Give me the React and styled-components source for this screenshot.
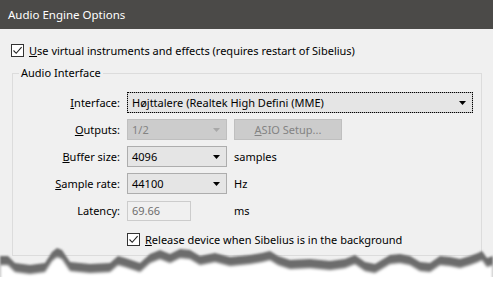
import React from "react";
import styled, { createGlobalStyle } from "styled-components";

const GlobalStyles = createGlobalStyle`
  html, body {
    margin: 0;
    padding: 0;
    background: #ffffff;
  }
  body {
    font-family: "Noto Sans", "Open Sans", sans-serif;
    font-size: 11px;
    color: #000;
  }
`;

// jagged edge of the torn screenshot, in page coordinates (y offset by 243 in the svg)
const edge = [
  [0, 256], [8, 256], [15, 263], [30, 265], [45, 263], [52, 252], [57, 248],
  [62, 250], [70, 262], [90, 264], [110, 263], [118, 256], [125, 258],
  [140, 263], [150, 254], [160, 250], [170, 254], [180, 249], [190, 250],
  [200, 256], [215, 253], [230, 257], [250, 255], [262, 253], [270, 251],
  [278, 256], [290, 260], [310, 259], [330, 261], [345, 259], [355, 255],
  [365, 262], [375, 264], [390, 255], [400, 254], [410, 256], [420, 262],
  [430, 263], [440, 256], [450, 257], [460, 259], [470, 256], [478, 253],
  [482, 251], [487, 258], [493, 256],
];

const edgePath = (dy) =>
  "M0 40 " +
  edge.map(([x, y]) => `L${x} ${y - 243 + dy}`).join(" ") +
  " L493 40 Z";

const Check = () => (
  <svg width="11" height="11" viewBox="0 0 11 11">
    <path d="M1.5 5.5 L4.2 8.3 L9.6 2.2" fill="none" stroke="#222" strokeWidth="1.1" />
  </svg>
);

const Arrow = ({ disabled }) => (
  <svg width="7" height="4" viewBox="0 0 7 4">
    <path d="M0 0 H7 L3.5 4 Z" fill={disabled ? "#a8a8a8" : "#000"} />
  </svg>
);

const Key = ({ children }) => <u>{children}</u>;

export default function App() {
  return (
    <>
      <GlobalStyles />
      <Frame>
        <TitleBar>Audio Engine Options</TitleBar>
        <Body>
          <CheckRow>
            <Box>
              <Check />
            </Box>
            <span>
              <Key>U</Key>se virtual instruments and effects (requires restart of Sibelius)
            </span>
          </CheckRow>

          <Group>
            <Legend>Audio Interface</Legend>
            <Form>
              <Label>
                <Key>I</Key>nterface:
              </Label>
              <Select $wide $focused>
                <span>Højttalere (Realtek High Defini (MME)</span>
                <Arrow />
              </Select>

              <Label>
                <Key>O</Key>utputs:
              </Label>
              <Select $disabled>
                <span>1/2</span>
                <Arrow disabled />
              </Select>
              <Button>
                <Key>A</Key>SIO Setup...
              </Button>

              <Label>
                <Key>B</Key>uffer size:
              </Label>
              <Select>
                <span>4096</span>
                <Arrow />
              </Select>
              <Unit>samples</Unit>

              <Label>
                <Key>S</Key>ample rate:
              </Label>
              <Select>
                <span>44100</span>
                <Arrow />
              </Select>
              <Unit>Hz</Unit>

              <Label>Latency:</Label>
              <TextBox>69.66</TextBox>
              <Unit>ms</Unit>

              <ReleaseRow>
                <Box>
                  <Check />
                </Box>
                <span>
                  <Key>R</Key>elease device when Sibelius is in the background
                </span>
              </ReleaseRow>
            </Form>
          </Group>
        </Body>
        <Torn width="493" height="40" viewBox="0 0 493 40">
          <defs>
            <filter id="edge" x="-5%" y="-50%" width="110%" height="200%">
              <feGaussianBlur stdDeviation="0.8" />
            </filter>
            <filter id="fade" x="-5%" y="-50%" width="110%" height="200%">
              <feGaussianBlur stdDeviation="1.8" />
            </filter>
          </defs>
          <path d={edgePath(0)} fill="#6c6c6c" filter="url(#edge)" />
          <path d={edgePath(9)} fill="#ffffff" filter="url(#fade)" />
          <rect x="0" y="34" width="493" height="6" fill="#ffffff" />
        </Torn>
      </Frame>
    </>
  );
}

const Frame = styled.div`
  position: relative;
  width: 493px;
  height: 283px;
  overflow: hidden;
  background: #ffffff;
`;

const TitleBar = styled.div`
  height: 29px;
  line-height: 29px;
  padding-left: 8px;
  background: #4b4a48;
  color: #ffffff;
  font-size: 11.5px;
`;

const Body = styled.div`
  background: #f0f0f0;
  height: 290px;
  padding-top: 15px;
  box-sizing: border-box;
`;

const CheckRow = styled.div`
  display: flex;
  align-items: center;
  gap: 5px;
  height: 13px;
  padding-left: 11px;
`;

const Box = styled.div`
  width: 13px;
  height: 13px;
  box-sizing: border-box;
  border: 1px solid #333333;
  background: #ffffff;
  display: flex;
  align-items: center;
  justify-content: center;
  flex: none;
`;

const Group = styled.fieldset`
  margin: 8px 11px 0 12px;
  padding: 11px 0 7px 0;
  border: 1px solid #dcdcdc;
  min-width: 0;
`;

const Legend = styled.legend`
  margin-left: 6px;
  padding: 0 2px;
  line-height: 16px;
`;

const Form = styled.div`
  display: grid;
  grid-template-columns: 107px 100px auto;
  grid-auto-rows: 21px;
  column-gap: 7px;
  row-gap: 6px;
  align-items: center;
`;

const Label = styled.div`
  text-align: right;
  white-space: nowrap;
`;

const Select = styled.div`
  grid-column: ${(p) => (p.$wide ? "2 / span 2" : "auto")};
  width: ${(p) => (p.$wide ? "346px" : "100px")};
  height: 21px;
  box-sizing: border-box;
  display: flex;
  align-items: center;
  justify-content: space-between;
  padding: 0 6px 0 4px;
  background: ${(p) => (p.$disabled ? "#cccccc" : "#e5e5e5")};
  border: 1px solid ${(p) => (p.$disabled ? "#bfbfbf" : "#adadad")};
  color: ${(p) => (p.$disabled ? "#838383" : "#000")};
  outline: ${(p) => (p.$focused ? "1px dotted #000" : "none")};
  outline-offset: -1px;
  white-space: nowrap;
`;

const Button = styled.div`
  width: 108px;
  height: 21px;
  box-sizing: border-box;
  display: flex;
  align-items: center;
  justify-content: center;
  background: #cccccc;
  border: 1px solid #bfbfbf;
  color: #838383;
`;

const Unit = styled.div`
  white-space: nowrap;
`;

const TextBox = styled.div`
  width: 64px;
  height: 20px;
  box-sizing: border-box;
  display: flex;
  align-items: center;
  padding-left: 4px;
  background: #f0f0f0;
  border: 1px solid #cccccc;
  color: #6d6d6d;
`;

const ReleaseRow = styled.div`
  grid-column: 2 / span 2;
  display: flex;
  align-items: center;
  gap: 5px;
  margin-top: 4px;
`;

const Torn = styled.svg`
  position: absolute;
  left: 0;
  bottom: 0;
  display: block;
`;
